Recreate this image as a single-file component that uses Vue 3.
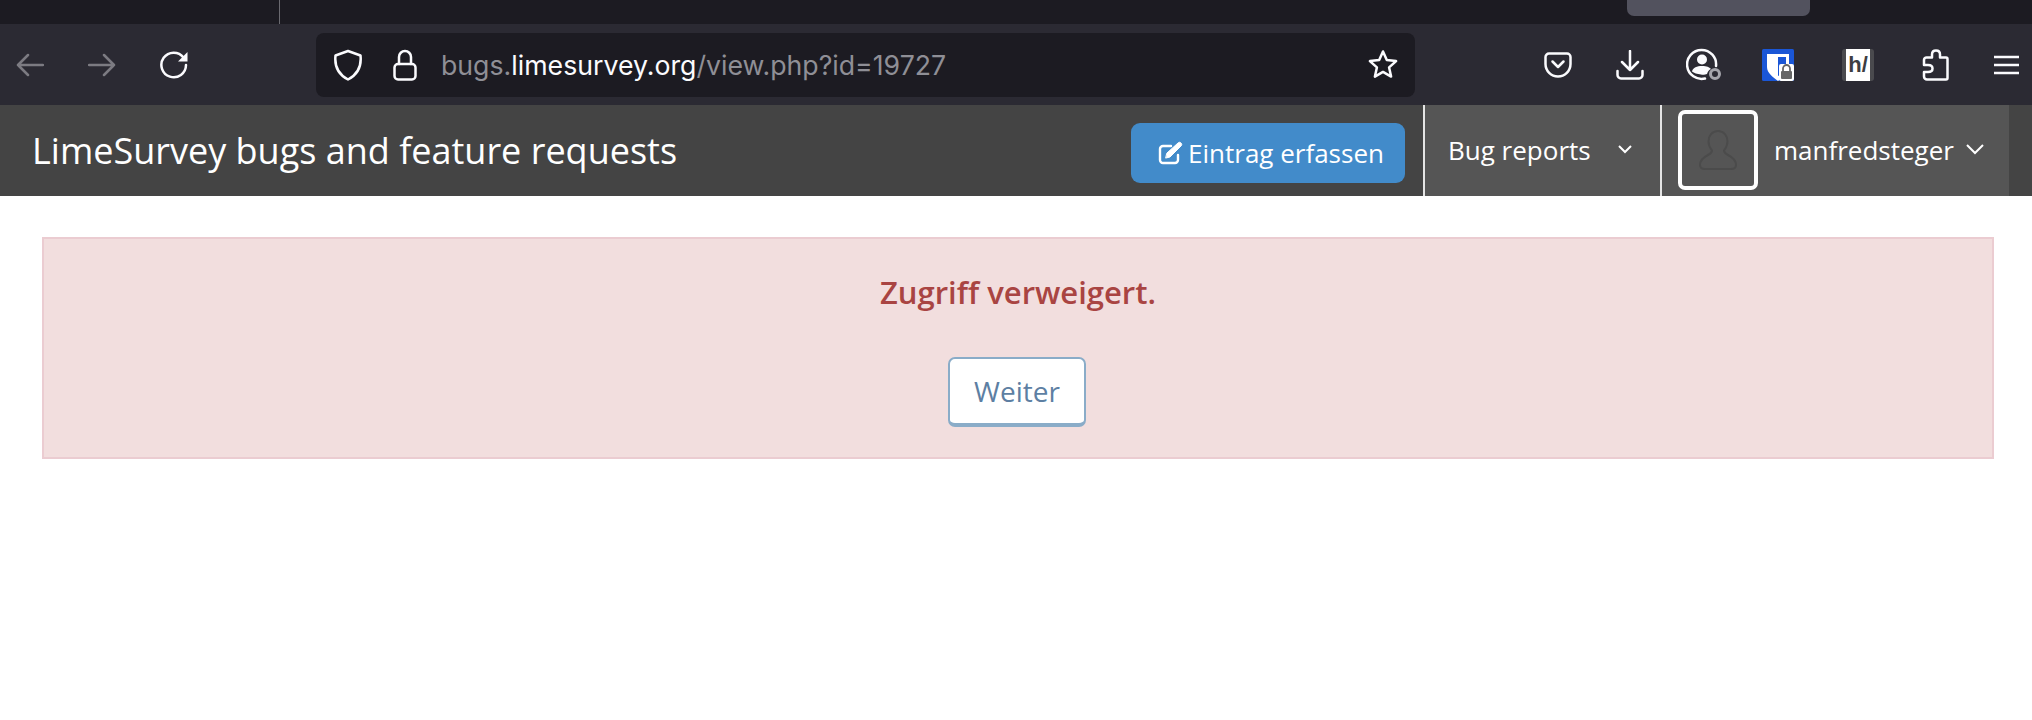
<template>
  <div class="page">
    <div class="tabstrip">
      <span class="tab-sep"></span>
      <span class="tab-hover"></span>
    </div>

    <div class="toolbar">
      <div class="nav-buttons">
        <svg class="ico dim" width="28" height="24" viewBox="0 0 28 24"><path d="M27 12H2M12 2 2 12l10 10" /></svg>
        <svg class="ico dim" width="28" height="24" viewBox="0 0 28 24"><path d="M1 12h25M16 2l10 10-10 10" /></svg>
        <svg class="ico" width="28" height="28" viewBox="0 0 28 28">
          <path d="M23.500 6.500A12.300 12.300 0 1 0 26 14" />
          <path class="solid" d="M27.500 1v9.500H18z" />
        </svg>
      </div>

      <div class="urlbar">
        <svg class="ico" width="30" height="32" viewBox="0 0 30 32"><path d="M15 2 27.500 6.500c1 9-1 18-12.500 24C3.500 24.500 1.500 15.500 2.500 6.500z" /></svg>
        <svg class="ico" width="24" height="32" viewBox="0 0 24 32"><path d="M6 15V8a6 6 0 0 1 12 0v7" /><rect x="1.500" y="15" width="21" height="15.500" rx="3.500" /></svg>
        <div class="url"><span class="url-dim">bugs.</span>limesurvey.org<span class="url-dim">/view.php?id=19727</span></div>
        <svg class="ico star" width="32" height="32" viewBox="0 0 32 32"><path d="M16 2.500l3.800 8.600 9.300 1-7 6.300 2 9.200-8.100-4.700-8.100 4.700 2-9.200-7-6.300 9.300-1z" /></svg>
      </div>

      <div class="toolbar-icons">
        <svg class="ico" width="28" height="26" viewBox="0 0 28 26"><path d="M5 1.500h18a3.500 3.500 0 0 1 3.500 3.500v7a12.500 12.500 0 0 1-25 0V5A3.500 3.500 0 0 1 5 1.500z" /><path d="M8.500 9.500 14 15l5.500-5.500" /></svg>
        <svg class="ico" width="28" height="30" viewBox="0 0 28 30"><path d="M14 1v19M6 12l8 8 8-8" /><path d="M1.500 21v4a3.500 3.500 0 0 0 3.500 3.500h18a3.500 3.500 0 0 0 3.500-3.500v-4" /></svg>
        <svg class="ico" width="37" height="33" viewBox="0 0 37 33">
          <path d="M30 18A14.500 14.500 0 1 0 19 30.500" />
          <circle class="solid" cx="16" cy="11.500" r="5" />
          <path class="solid" d="M6 23.500c1-4 5-5.500 10-5.500s7 1 9 3c-2 1-3 2-4 5-1.500.5-4 1-6 .5-4-.5-7-1.500-9-3z" />
          <circle class="grey-ring" cx="29" cy="26" r="4.500" />
        </svg>
        <svg width="32" height="32" viewBox="0 0 32 32">
          <rect width="32" height="32" rx="1.500" fill="#1a56d6" />
          <path d="M5 5h22v13c0 6-6 10-11 14-5-4-11-8-11-14z" fill="#fff" />
          <path d="M16 8h8v10c0 4-4 6.500-8 9z" fill="#1a56d6" />
          <rect x="17" y="15" width="15" height="17" rx="2" fill="#fff" />
          <path d="M21 22v-2.500a3.500 3.500 0 0 1 7 0V22" fill="none" stroke="#666" stroke-width="1.800" />
          <rect x="19" y="22" width="11" height="8" rx="1" fill="#666" />
        </svg>
        <div class="hyp">
          <span class="hyp-mark">h/</span>
        </div>
        <svg class="ico" width="27" height="32" viewBox="0 0 27 32"><path d="M14 1.500c2.500 0 4 1.500 4 4v3h6a1.500 1.500 0 0 1 1.500 1.500v19a1.500 1.500 0 0 1-1.500 1.500H5a3 3 0 0 1-3-3v-4.500h4c3 0 4.500-1.500 4.500-3.500S9 16 6 16H2v-5a2.500 2.500 0 0 1 2.500-2.500H10v-3c0-2.500 1.500-4 4-4z" /></svg>
        <svg class="ico" width="25" height="20" viewBox="0 0 25 20"><path d="M0 2h25M0 10h25M0 18h25" /></svg>
      </div>
    </div>

    <header class="navbar">
      <div class="brand">LimeSurvey bugs and feature requests</div>
      <button class="report-btn">
        <svg width="26" height="24" viewBox="0 0 26 24" fill="none" stroke="#fff" stroke-width="2.400" stroke-linecap="round" stroke-linejoin="round">
          <path d="M20 14v5a3 3 0 0 1-3 3H5a3 3 0 0 1-3-3V8a3 3 0 0 1 3-3h8" />
          <path d="M9 12 20 2c1-1 2-1 3 0s1 2 0 3L12 16l-4 1z" fill="#fff" stroke-width="1" />
        </svg>
        <span>Eintrag erfassen</span>
      </button>
      <div class="nav-item project">
        <span>Bug reports</span>
        <svg class="chev" width="14" height="9" viewBox="0 0 14 9"><path d="M1 1l6 6 6-6" /></svg>
      </div>
      <div class="nav-item user">
        <div class="avatar">
          <svg width="38" height="40" viewBox="0 0 38 40" fill="none" stroke="#4b4b4b" stroke-width="2">
            <path d="M19 1c6 0 9.500 5 9.500 10.500 0 4-2 7-3.500 9 0 2 1 3 4 4.500 4 2 8 5 8 10 0 3-2 4-5 4H6c-3 0-5-1-5-4 0-5 4-8 8-10 3-1.500 4-2.500 4-4.500-1.500-2-3.500-5-3.500-9C9.500 6 13 1 19 1z" />
          </svg>
        </div>
        <span class="nav-label">manfredsteger</span>
        <svg class="chev" width="18" height="11" viewBox="0 0 18 11"><path d="M1 1l8 8 8-8" /></svg>
      </div>
    </header>

    <main class="content">
      <div class="alert">
        <p class="alert-text">Zugriff verweigert.</p>
        <a class="continue-btn">Weiter</a>
      </div>
    </main>
  </div>
</template>

<script setup>
</script>

<style>
html, body {
  background: #fff;
  margin: 0;
}
</style>

<style scoped>
.page {
  width: 2032px;
  height: 720px;
  overflow: hidden;
  font-family: "Open Sans", "Liberation Sans", sans-serif;
}

.tabstrip {
  height: 24px;
  background: #1c1b22;
  display: flex;
  align-items: flex-start;
}

.tab-sep {
  width: 1px;
  height: 24px;
  margin-left: 279px;
  background: #6a6a70;
}

.tab-hover {
  width: 183px;
  height: 16px;
  margin-left: 1347px;
  background: #52525e;
  border-radius: 0 0 7px 7px;
}

.toolbar {
  height: 81px;
  background: #2b2a33;
  display: flex;
  align-items: center;
}

.ico {
  fill: none;
  stroke: #fbfbfe;
  stroke-width: 2.500;
  stroke-linecap: round;
  stroke-linejoin: round;
  flex-shrink: 0;
}

.ico.dim {
  stroke: #7c7b82;
}

.ico .solid {
  fill: #fbfbfe;
  stroke: none;
}

.ico .grey-ring {
  stroke: #a5a5ac;
  stroke-width: 3;
}

.nav-buttons {
  width: 316px;
  padding-left: 16px;
  box-sizing: border-box;
  display: flex;
  align-items: center;
  gap: 44px;
}

.urlbar {
  width: 1099px;
  height: 64px;
  background: #1c1b22;
  border-radius: 8px;
  display: flex;
  align-items: center;
  padding: 0 16px 0 17px;
  box-sizing: border-box;
}

.urlbar .ico + .ico {
  margin-left: 30px;
}

.url {
  margin-left: 24px;
  flex: 1;
  font-family: Inter, "Liberation Sans", sans-serif;
  font-size: 26.700px;
  color: #fbfbfe;
}

.url-dim {
  color: #8f8f96;
}

.urlbar .star {
  margin-left: 0;
}

.toolbar-icons {
  flex: 1;
  padding-left: 129px;
  display: flex;
  align-items: center;
}

.toolbar-icons > :nth-child(2) { margin-left: 44px; }
.toolbar-icons > :nth-child(3) { margin-left: 42px; }
.toolbar-icons > :nth-child(4) { margin-left: 39px; }
.toolbar-icons > :nth-child(5) { margin-left: 48px; }
.toolbar-icons > :nth-child(6) { margin-left: 48px; }
.toolbar-icons > :nth-child(7) { margin-left: 45px; }

.hyp {
  width: 32px;
  height: 32px;
  flex-shrink: 0;
  border-radius: 3px;
  background: linear-gradient(90deg, #4a4a4e 0 4px, #fff 4px 28px, #4a4a4e 28px);
  display: flex;
  align-items: center;
  justify-content: center;
}

.hyp-mark {
  color: #3d3d42;
  font: bold 22px "Liberation Sans", sans-serif;
  line-height: 1;
}

.navbar {
  height: 91px;
  background: #444;
  display: flex;
  align-items: stretch;
  color: #fff;
  padding: 0 23px 0 32px;
}

.brand {
  font-size: 36px;
  line-height: 92px;
  margin-right: auto;
}

.report-btn {
  align-self: center;
  width: 274px;
  height: 60px;
  margin-top: 4px;
  margin-right: 18px;
  padding-left: 12px;
  background: #428bca;
  border: none;
  border-radius: 9px;
  color: #fff;
  font: 26px "Open Sans", sans-serif;
  display: flex;
  align-items: center;
  justify-content: center;
  gap: 4px;
}

.nav-item {
  background: #555;
  border-left: 2px solid #e5e5e5;
  display: flex;
  align-items: center;
  font-size: 26px;
  padding-bottom: 2px;
}

.chev {
  fill: none;
  stroke: #fff;
  stroke-width: 2;
}

.project {
  width: 237px;
  box-sizing: border-box;
  padding-left: 23px;
  gap: 27px;
}

.user {
  width: 349px;
  box-sizing: border-box;
  padding-left: 16px;
}

.avatar {
  width: 80px;
  height: 80px;
  box-sizing: border-box;
  border: 4px solid #fff;
  border-radius: 7px;
  display: flex;
  align-items: center;
  justify-content: center;
  margin-right: 16px;
}

.user .chev {
  margin-left: 12px;
}

.content {
  padding: 41px 38px 0 42px;
}

.alert {
  height: 222px;
  box-sizing: border-box;
  background: #f2dede;
  border: 2px solid #ebccd1;
  display: flex;
  flex-direction: column;
  align-items: center;
}

.alert-text {
  margin: 30px 0 0;
  font-size: 31px;
  font-weight: 600;
  line-height: 46px;
  color: #a94442;
}

.continue-btn {
  margin-top: 42px;
  margin-right: 2px;
  width: 138px;
  height: 70px;
  box-sizing: border-box;
  background: #fff;
  border: 2px solid #8aacc8;
  border-bottom-width: 4px;
  border-radius: 7px;
  color: #5d7fa3;
  font-size: 28px;
  display: flex;
  align-items: center;
  justify-content: center;
}
</style>
